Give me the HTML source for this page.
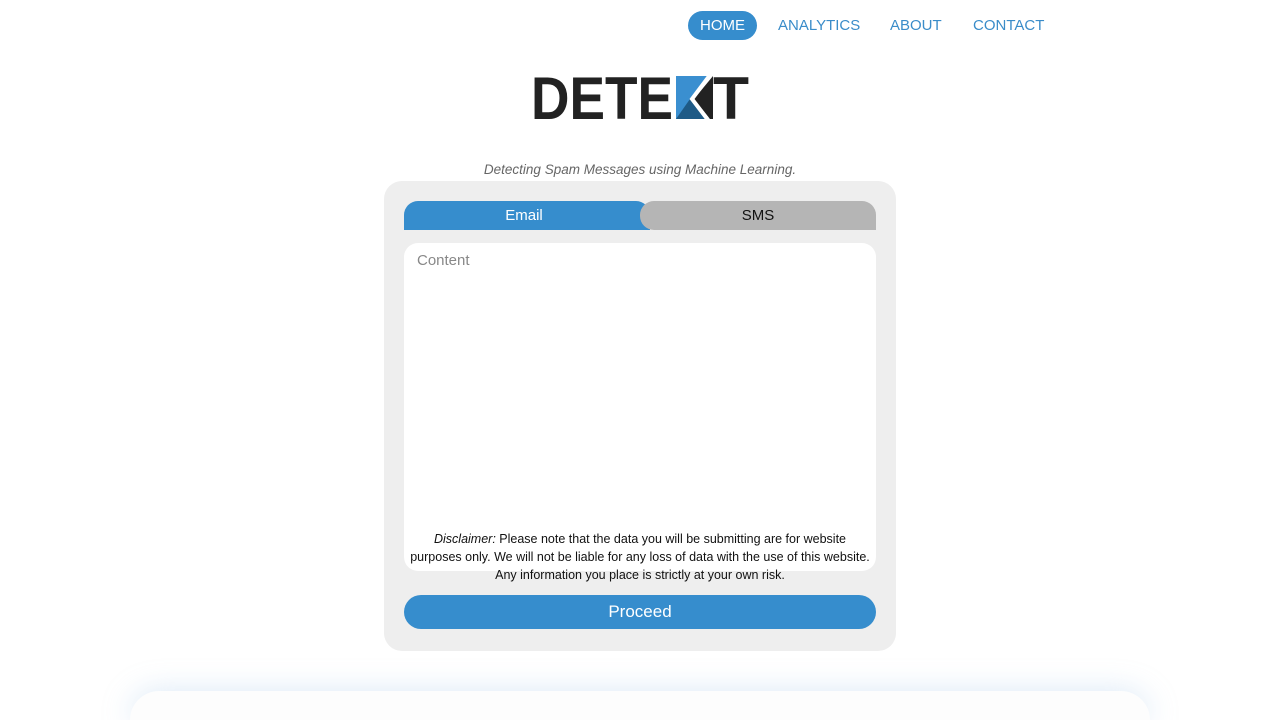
<!DOCTYPE html>
<html><head><meta charset="utf-8"><style>
*{margin:0;padding:0;box-sizing:border-box}
html,body{width:1280px;height:720px;overflow:hidden}
body{background:#fff;font-family:"Liberation Sans",sans-serif;position:relative}
.nav a{position:absolute;top:11px;height:29px;line-height:29px;font-size:15px;color:#3a8cc9;text-decoration:none}
.home{left:688px;width:69px;background:#368dcd;color:#fff!important;border-radius:15px;text-align:center}
.tag{position:absolute;top:162px;left:0;width:1280px;text-align:center;font-size:13.5px;font-style:italic;color:#666}
.card{position:absolute;left:384px;top:181px;width:512px;height:470px;background:#eeeeee;border-radius:18px}
.t1{position:absolute;left:20px;top:20px;width:246px;height:29px;background:#368dcd;color:#fff;border-radius:14px 14px 0 0;text-align:center;line-height:29px;font-size:15px;padding-right:6px}
.t2{position:absolute;left:256px;top:20px;width:236px;height:29px;background:#b5b5b5;color:#111;border-radius:14px 14px 0 14px;text-align:center;line-height:29px;font-size:15px}
.ta{position:absolute;left:20px;top:62px;width:472px;height:328px;background:#fff;border-radius:14px}
.ph{position:absolute;left:13px;top:9px;color:#888;font-size:15px}
.dis{position:absolute;left:6px;top:287px;width:460px;text-align:center;font-size:12.5px;line-height:18px;color:#111}
.btn{position:absolute;left:20px;top:414px;width:472px;height:34px;border-radius:17px;background:#368dcd;color:#fff;text-align:center;line-height:34px;font-size:17px}
.bottom{position:absolute;left:130px;top:691px;width:1020px;height:29px;background:#fdfdfd;border-radius:40px 40px 0 0;box-shadow:0 0 30px rgba(150,190,230,.35)}
</style></head><body>
<div class="nav"><a class="home">HOME</a><a style="left:778px">ANALYTICS</a><a style="left:890px">ABOUT</a><a style="left:973px">CONTACT</a></div>
<svg style="position:absolute;left:530px;top:72px" width="222" height="50" viewBox="0 0 222 50">
<text x="1" y="47" font-family="Liberation Sans" font-weight="bold" font-size="60" fill="#222" textLength="142" lengthAdjust="spacingAndGlyphs">DETE</text>
<polygon points="146,4 178,4 160,27 180,47 146,47" fill="#3a8fd0"/>
<polygon points="146,47 160,27 175,47" fill="#1e5a86"/>
<polygon points="183,4 183,47 180,47 164,27" fill="#222"/>
<polyline points="180,3 162,27 178,48" fill="none" stroke="#fff" stroke-width="4"/>
<text x="183" y="47" font-family="Liberation Sans" font-weight="bold" font-size="60" fill="#222" textLength="36" lengthAdjust="spacingAndGlyphs">T</text>
</svg>
<div class="tag">Detecting Spam Messages using Machine Learning.</div>
<div class="card">
<div class="t1">Email</div><div class="t2">SMS</div>
<div class="ta"><div class="ph">Content</div>
<div class="dis"><i>Disclaimer:</i> Please note that the data you will be submitting are for website purposes only. We will not be liable for any loss of data with the use of this website. Any information you place is strictly at your own risk.</div></div>
<div class="btn">Proceed</div>
</div>
<div class="bottom"></div>
</body></html>
